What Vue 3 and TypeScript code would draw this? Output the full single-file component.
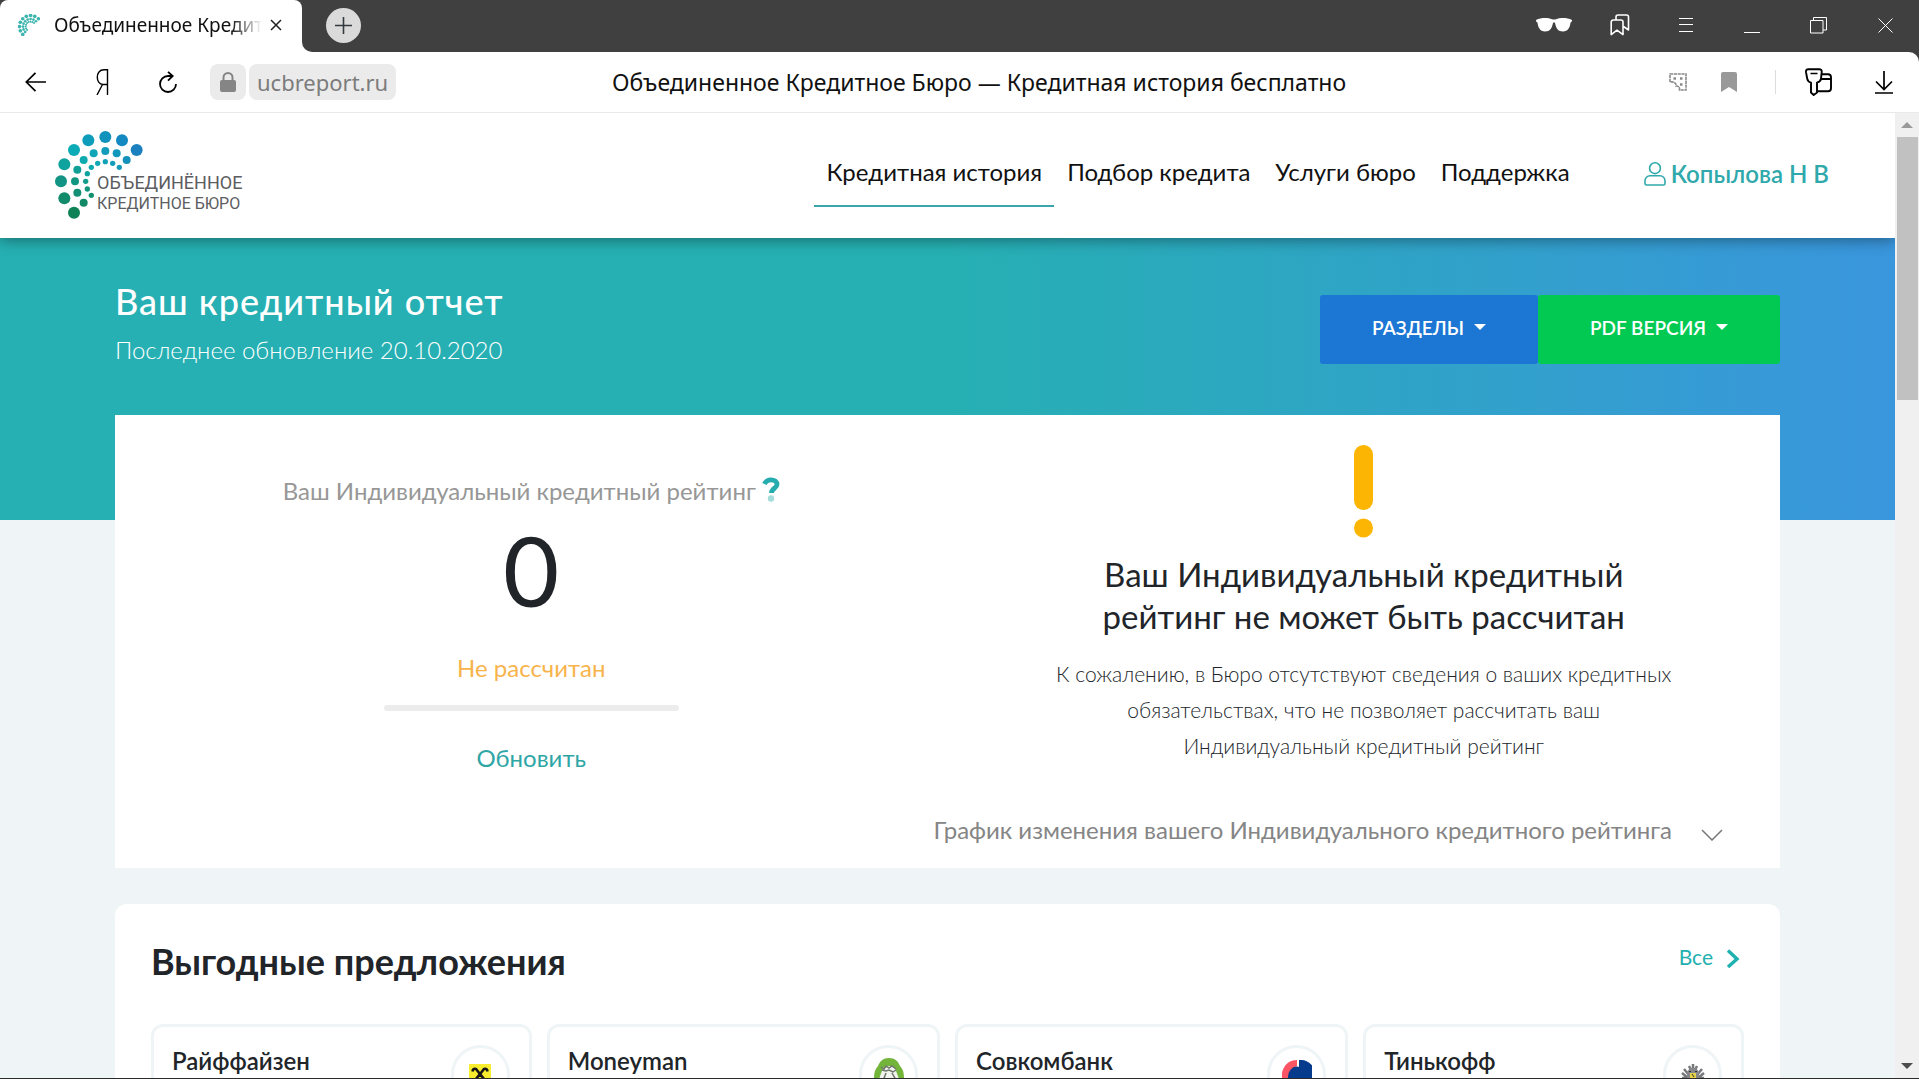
<script setup lang="ts">
interface Dot {
  x: number
  y: number
  r: number
  c: string
}

const dots: Dot[] = [
  { x: 290, y: 90, r: 18, c: '#1a80bf' },
  { x: 246, y: 61, r: 18, c: '#1488c0' },
  { x: 196, y: 51, r: 18, c: '#1092bd' },
  { x: 145, y: 61, r: 18, c: '#0d9dbb' },
  { x: 102, y: 90, r: 18, c: '#0aabb6' },
  { x: 73, y: 133, r: 18, c: '#10a29c' },
  { x: 63, y: 184, r: 18, c: '#129484' },
  { x: 73, y: 235, r: 18, c: '#128a6c' },
  { x: 102, y: 278, r: 18, c: '#0e8255' },
  { x: 260, y: 120, r: 12, c: '#1590bb' },
  { x: 230, y: 100, r: 12, c: '#1297bc' },
  { x: 196, y: 93, r: 12, c: '#109cba' },
  { x: 161, y: 100, r: 12, c: '#0fa4b8' },
  { x: 131, y: 120, r: 12, c: '#0eaaaf' },
  { x: 112, y: 149, r: 12, c: '#109f97' },
  { x: 105, y: 184, r: 12, c: '#129682' },
  { x: 112, y: 218, r: 12, c: '#128f74' },
  { x: 131, y: 248, r: 12, c: '#128a68' },
  { x: 238, y: 142, r: 8, c: '#159bb8' },
  { x: 218, y: 130, r: 8, c: '#129eb9' },
  { x: 196, y: 125, r: 8, c: '#10a3b8' },
  { x: 173, y: 130, r: 8, c: '#0fa8b4' },
  { x: 154, y: 142, r: 8, c: '#0faaac' },
  { x: 142, y: 161, r: 8, c: '#10a39e' },
  { x: 137, y: 184, r: 8, c: '#129c8c' },
  { x: 142, y: 207, r: 8, c: '#12957d' },
  { x: 154, y: 226, r: 8, c: '#129072' },
]

const menu: string[] = ['Кредитная история', 'Подбор кредита', 'Услуги бюро', 'Поддержка']
const offers: { name: string; logo: string }[] = [
  { name: 'Райффайзен', logo: 'raiffeisen' },
  { name: 'Moneyman', logo: 'moneyman' },
  { name: 'Совкомбанк', logo: 'sovcombank' },
  { name: 'Тинькофф', logo: 'tinkoff' },
]
</script>

<template>
  <div class="window">
    <div class="tabs">
      <div class="tab-slot">
        <div class="tab">
          <svg class="favicon" viewBox="45 33 264 264" aria-hidden="true">
            <circle v-for="(d, i) in dots" :key="i" :cx="d.x" :cy="d.y" :r="d.r + 4" fill="#3db5ae" />
          </svg>
          <span class="tab-title">Объединенное Кредитное Бюро</span>
          <button class="tab-close" aria-label="Закрыть вкладку">
            <svg width="12" height="12" viewBox="0 0 12 12"><path d="M1 1l10 10M11 1L1 11" stroke="#222" stroke-width="1.5" /></svg>
          </button>
        </div>
      </div>
      <div class="strip">
        <button class="new-tab" aria-label="Новая вкладка">
          <svg width="17" height="17" viewBox="0 0 17 17"><path d="M8.500 0v17M0 8.500h17" stroke="#333a3f" stroke-width="1.6" /></svg>
        </button>
        <div class="win-buttons">
          <button aria-label="Инкогнито">
            <svg width="36" height="14" viewBox="0 0 36 14" fill="#fff"><path d="M0 2C5-.5 12-.3 16 1.200q2 .6 4 0C24-.3 31-.5 36 2c0 1.500-.6 2-1.500 2.600C34 9.500 32 13.500 27 13.500c-5 0-7-3.500-8-8.500q-1-1.500-2 0c-1 5-3 8.500-8 8.500S2 9.500 1.500 4.600C.6 4 0 3.500 0 2z" /></svg>
          </button>
          <button aria-label="Закладки">
            <svg width="20" height="22" viewBox="0 0 20 22" fill="none" stroke="#fff" stroke-width="1.600" stroke-linejoin="round"><path d="M1.200 8a2 2 0 0 1 2-2H11a2 2 0 0 1 2 2v12.600l-6-4.400-5.800 4.400zM6 5.500V3a2 2 0 0 1 2-2h8.500a2 2 0 0 1 2 2v13l-5-3.500" /></svg>
          </button>
          <button aria-label="Меню">
            <svg width="14" height="14" viewBox="0 0 14 14" stroke="#fff"><path d="M0 .5h14M0 6.500h14M0 13.500h14" /></svg>
          </button>
          <button aria-label="Свернуть">
            <svg width="16" height="16" viewBox="0 0 16 16" stroke="#fff"><path d="M0 15.500h16" /></svg>
          </button>
          <button aria-label="Восстановить">
            <svg width="17" height="17" viewBox="0 0 17 17" fill="none" stroke="#fff"><path d="M.5 3.500h12.500v12.500H.5zM3.500 3V.5h13v12.500H13" /></svg>
          </button>
          <button class="close" aria-label="Закрыть">
            <svg width="15" height="15" viewBox="0 0 15 15" stroke="#fff"><path d="M.5.5l14 14M14.500.5l-14 14" /></svg>
          </button>
        </div>
      </div>
    </div>

    <div class="toolbar-back">
      <div class="toolbar">
        <div class="nav-buttons">
          <button aria-label="Назад">
            <svg width="22" height="20" viewBox="0 0 22 20" fill="none" stroke="#000" stroke-width="1.700"><path d="M21 10H1.500M10.500.8L1.300 10l9.200 9.200" /></svg>
          </button>
          <button aria-label="Яндекс">
            <svg width="13" height="26" viewBox="0 0 13 26" fill="none" stroke="#000" stroke-width="1.400"><path d="M11.500 26V.8H8C3.500.8 1.300 4 1.300 8.200S3.500 15.500 7 15.500h4.500M6.500 15.500L1 26" /></svg>
          </button>
          <button aria-label="Обновить страницу">
            <svg width="18" height="22" viewBox="0 0 18 22" fill="none" stroke="#000" stroke-width="1.800"><path d="M13.500 5H9a8 8 0 1 0 8 8M9 .8L13.700 5 9 9.700" /></svg>
          </button>
        </div>
        <button class="lock" aria-label="Сведения о сайте">
          <svg width="16" height="20" viewBox="0 0 16 20"><rect y="8" width="16" height="12" rx="2" fill="#858585" /><path d="M3.500 9V5.500a4.500 4.500 0 0 1 9 0V9" fill="none" stroke="#858585" stroke-width="2" /></svg>
        </button>
        <button class="domain">ucbreport.ru</button>
        <div class="page-title">Объединенное Кредитное Бюро — Кредитная история бесплатно</div>
        <div class="tools">
          <button class="small" aria-label="Перевод">
            <svg width="18" height="18" viewBox="0 0 18 18" fill="none" stroke="#8a8a8a" stroke-width="1.600"><path d="M1 1h16v16h-6.500c.5-3-1-4-3.500-4 .3-3-2-4.500-6-4z" stroke-dasharray="3.200 .6" /><path d="M4.500 5.500h2.500M11 5.500h2.500M11 11.500h2.500" stroke-width="2.400" /></svg>
          </button>
          <button class="small" aria-label="В закладки">
            <svg width="16" height="20" viewBox="0 0 16 20"><path d="M0 2q0-2 2-2h12q2 0 2 2v18l-8-5-8 5z" fill="#999" /></svg>
          </button>
          <span class="divider"></span>
          <button class="wide" aria-label="Пароли и карты">
            <svg width="27" height="28" viewBox="0 0 27 28" fill="none" stroke="#000" stroke-width="1.900" stroke-linejoin="round"><path d="M3.500 1.200h10.500q3 0 2.700 3l-.7 6.500q-.3 3-4 4V24.500l-3.300 2.500L6 24.500V14.700q-3.300-1-3.800-4L1 4.200q-.3-3 2.500-3z" /><path d="M5.500 5.500h7" stroke-width="1.500" /><path d="M16.500 6.200H23q3 0 3 3v11q0 3-3 3H12.500M16 11h10" /></svg>
          </button>
          <button class="wide" aria-label="Загрузки">
            <svg width="18" height="23" viewBox="0 0 18 23" fill="none" stroke="#000" stroke-width="1.700"><path d="M9 0v18M1 10.500l8 8 8-8M0 22h18" /></svg>
          </button>
        </div>
      </div>
    </div>

    <div class="viewport">
      <div class="page">
        <header class="header">
          <a class="logo" href="#">
            <svg viewBox="45 33 264 264" width="88" height="88" aria-hidden="true">
              <circle v-for="(d, i) in dots" :key="i" :cx="d.x" :cy="d.y" :r="d.r" :fill="d.c" />
            </svg>
            <span class="logo-text">ОБЪЕДИНЁННОЕ<br /><small>КРЕДИТНОЕ БЮРО</small></span>
          </a>
          <nav class="menu">
            <a v-for="(m, i) in menu" :key="m" href="#" :class="{ active: i === 0 }">{{ m }}</a>
          </nav>
          <a class="user" href="#">
            <svg width="22" height="24" viewBox="0 0 22 24" fill="none" stroke="#2fa9ab" stroke-width="1.600"><circle cx="11" cy="6.200" r="5.400" /><path d="M6 13.800h10a5 5 0 0 1 5 5v2.700q0 1.500-1.500 1.500h-17Q1 23 1 21.500v-2.700a5 5 0 0 1 5-5z" /></svg>
            <span>Копылова Н В</span>
          </a>
        </header>

        <section class="hero">
          <div>
            <h1>Ваш кредитный отчет</h1>
            <p>Последнее обновление 20.10.2020</p>
          </div>
          <div class="actions">
            <button class="sections">Разделы<i class="caret"></i></button>
            <button class="pdf">PDF версия<i class="caret"></i></button>
          </div>
        </section>

        <main class="content">
          <section class="rating">
            <div class="halves">
              <div class="score">
                <p class="score-label">
                  Ваш Индивидуальный кредитный рейтинг
                  <svg width="18" height="26" viewBox="0 0 18 26"><path d="M2.500 8C3.700 5 6.200 3.800 9 3.800c3.800 0 6 1.900 6 4.600 0 4-5.500 3.800-5.500 8.600" fill="none" stroke="#24acae" stroke-width="4.800" /><circle cx="9" cy="22.500" r="3.200" fill="#a5dcdc" /></svg>
                </p>
                <div class="score-value">0</div>
                <div class="score-state">Не рассчитан</div>
                <div class="score-bar"></div>
                <a href="#" class="refresh">Обновить</a>
              </div>
              <div class="notice">
                <svg width="19" height="93" viewBox="0 0 19 93" fill="#fcb503"><rect width="19" height="65" rx="9.500" /><circle cx="9.500" cy="83" r="9.500" /></svg>
                <h2>Ваш Индивидуальный кредитный рейтинг не может быть рассчитан</h2>
                <p>К сожалению, в Бюро отсутствуют сведения о ваших кредитных обязательствах, что не позволяет рассчитать ваш Индивидуальный кредитный рейтинг</p>
              </div>
            </div>
            <button class="chart-toggle">
              График изменения вашего Индивидуального кредитного рейтинга
              <svg width="22" height="22" viewBox="0 0 22 22" fill="none" stroke="#777" stroke-width="1.500"><path d="M1 11l10 10L21 11" /></svg>
            </button>
          </section>

          <section class="offers">
            <div class="offers-head">
              <h2>Выгодные предложения</h2>
              <a href="#">
                Все
                <svg width="14" height="22" viewBox="0 0 14 22" fill="none" stroke="#1fb0b0" stroke-width="3.400"><path d="M2 4.500L11 13 2 21" /></svg>
              </a>
            </div>
            <div class="offer-list">
              <article v-for="o in offers" :key="o.name" class="offer">
                <h3>{{ o.name }}</h3>
                <div class="badge">
                  <svg v-if="o.logo === 'raiffeisen'" width="22" height="22" viewBox="0 0 22 22"><rect width="22" height="22" fill="#f8ec2e" /><path d="M3.500 7.500Q4 4 7 5l4 5 4-5q3-1 3.500 2.500M7 5l8 10v4M15 5L7 15v4" fill="none" stroke="#151515" stroke-width="2.600" /></svg>
                  <svg v-else-if="o.logo === 'moneyman'" width="30" height="34" viewBox="0 0 30 34"><path d="M15 0c6 0 9 3 11 8 3 3 4 7 4 12 0 9-7 14-15 14S0 29 0 20C0 15 1 11 4 8 6 3 9 0 15 0z" fill="#73b53a" /><path d="M9 10q6-4 12 0l4 11-3 11H8L5 21z" fill="#f1f3ee" /><path d="M7 9l3 2 2-3 3 2 3-2 4 3M8 12l4 1 3-1 4 2 3-2M12 15l-3 8M18 15l4 7" fill="none" stroke="#6f776b" stroke-width="1.500" /></svg>
                  <svg v-else-if="o.logo === 'sovcombank'" width="30" height="30" viewBox="0 0 30 30"><path d="M17 0a15 15 0 1 1-7.500 27A9 9 0 0 1 17 7z" fill="#063a8c" /><path d="M17 7.500a10 10 0 0 0-8.500 9V30h12z" fill="#063a8c" /><path d="M15 0v6A11 11 0 0 0 6 17v8L3 24A15 15 0 0 1 15 0z" fill="#fb5565" /></svg>
                  <svg v-else width="24" height="24" viewBox="0 0 24 24"><path d="M12 1v4M8 3l2 4M16 3l-2 4M3 6l5 6M21 6l-5 6M1 10l6 5M23 10l-6 5M1 15h6M23 15h-6" stroke="#77787b" stroke-width="2.500" fill="none" /><path d="M6 9l3-4h6l3 4v9l-6 5-6-5z" fill="#85868a" /><path d="M9 10h6v7l-3 2-3-2z" fill="#e6d34a" /><path d="M8 8.500h2M14 8.500h2M11 11l2 3" stroke="#333" /></svg>
                </div>
              </article>
            </div>
          </section>
        </main>
      </div>
      <div class="scrollbar" aria-hidden="true">
        <i class="arrow-up"></i>
        <i class="thumb"></i>
        <i class="arrow-down"></i>
      </div>
    </div>
  </div>
</template>

<style>
body {
  background: #eff5f7;
}
</style>

<style scoped>
.window,
.window * {
  box-sizing: border-box;
}
.window {
  display: flex;
  flex-direction: column;
  height: 100vh;
  overflow: hidden;
  border-bottom: 1px solid #2b2b2b;
  background: #fff;
  color: #212529;
  font-family: Lato, 'Open Sans', sans-serif;
}
h1,
h2,
h3,
p {
  margin: 0;
}
button {
  border: 0;
  padding: 0;
  background: none;
  font: inherit;
  color: inherit;
  display: flex;
  align-items: center;
  justify-content: center;
}
a {
  color: inherit;
  text-decoration: none;
}
svg {
  display: block;
  flex: none;
}

.tabs {
  display: flex;
  height: 52px;
  flex: none;
}
.tab-slot {
  flex: none;
  width: 302px;
  background: linear-gradient(#404040 20px, #fff 20px);
}
.tab {
  display: flex;
  align-items: center;
  height: 52px;
  padding: 0 20px 2px 18px;
  border-radius: 8px 8px 0 0;
  background: #fff;
}
.favicon {
  width: 22px;
  height: 22px;
  margin-right: 14px;
}
.tab-title {
  flex: 1;
  overflow: hidden;
  white-space: nowrap;
  font: 19px/28px 'Noto Sans', sans-serif;
  color: #111;
  mask-image: linear-gradient(90deg, #000 85%, transparent);
}
.tab-close {
  margin-left: 8px;
}
.strip {
  flex: 1;
  display: flex;
  align-items: center;
  justify-content: space-between;
  padding: 0 0 2px 24px;
  border-bottom-left-radius: 10px;
  background: #404040;
}
.new-tab {
  width: 35px;
  height: 35px;
  border-radius: 50%;
  background: #dadada;
}
.win-buttons {
  display: flex;
}
.win-buttons button {
  width: 66px;
  height: 50px;
}
.win-buttons .close {
  width: 68px;
}

.toolbar-back {
  flex: none;
  background: #404040;
}
.toolbar {
  display: flex;
  align-items: center;
  height: 61px;
  border-bottom: 1px solid #e9e9e9;
  border-top-right-radius: 10px;
  background: #fff;
}
.nav-buttons {
  display: flex;
  padding: 0 9px 0 3px;
}
.nav-buttons button {
  width: 66px;
  height: 36px;
}
.lock {
  width: 36px;
  height: 36px;
  margin-right: 3px;
  border-radius: 8px;
  background: #ebebeb;
}
.domain {
  height: 36px;
  padding: 0 8px;
  border-radius: 8px;
  background: #ebebeb;
  font: 22px/36px 'Noto Sans', sans-serif;
  color: #7c7c7c;
}
.page-title {
  flex: 1;
  text-align: center;
  white-space: nowrap;
  font: 23px/36px 'Noto Sans', sans-serif;
  color: #111;
}
.tools {
  display: flex;
  align-items: center;
  justify-content: flex-end;
  width: 357px;
  padding-right: 2px;
}
.small {
  width: 51px;
  height: 36px;
}
.divider {
  width: 1px;
  height: 24px;
  margin: 0 9px 0 21px;
  background: #ddd;
}
.wide {
  width: 66px;
  height: 36px;
}

.viewport {
  flex: 1;
  min-height: 0;
  display: flex;
}
.page {
  flex: 1;
  min-width: 0;
  overflow: hidden;
  background: #eff5f7;
}
.header {
  position: relative;
  z-index: 1;
  display: flex;
  align-items: center;
  height: 125px;
  padding: 0 66px 4px 55px;
  background: #fff;
  box-shadow: 0 2px 14px rgba(0, 0, 0, 0.4);
}
.logo {
  position: relative;
  width: 190px;
  padding-top: 2px;
}
.logo-text {
  position: absolute;
  left: 42px;
  top: 44px;
  white-space: nowrap;
  font: 18px/20px Roboto, sans-serif;
  color: #5c5d61;
}
.logo-text small {
  font-size: 16px;
}
.menu {
  display: flex;
  gap: 1px;
  margin-left: auto;
  font-size: 24px;
  line-height: 30px;
  color: #111;
}
.menu a {
  padding: 16px 12px 18px;
  border-bottom: 2px solid transparent;
}
.menu a.active {
  border-color: #3aa6ab;
}
.user {
  display: flex;
  align-items: center;
  gap: 5px;
  margin-left: 62px;
  font-size: 24px;
  line-height: 30px;
  font-weight: 600;
  color: #2fa9ab;
}

.hero {
  display: flex;
  justify-content: space-between;
  align-items: flex-start;
  height: 282px;
  padding: 41px 115px 0;
  background: linear-gradient(90deg, #26b0b3 50%, #3a96dd);
  color: #fff;
}
.hero h1 {
  font-size: 36px;
  line-height: 44px;
  font-weight: 500;
  letter-spacing: 1px;
}
.hero p {
  margin-top: 12px;
  font-size: 24px;
  line-height: 30px;
  font-weight: 300;
}
.actions {
  display: flex;
  margin-top: 16px;
}
.actions button {
  height: 69px;
  padding: 0 52px 4px;
  border-radius: 3px;
  background: #1b76d4;
  font-size: 19px;
  font-weight: 600;
  text-transform: uppercase;
  color: #fff;
}
.actions .pdf {
  background: #02c952;
}
.caret {
  margin: 0 0 2px 10px;
  border: 6px solid transparent;
  border-top-color: #fff;
  border-bottom: 0;
}

.content {
  position: relative;
  margin-top: -105px;
  padding: 0 115px;
}
.rating {
  height: 453px;
  background: #fff;
}
.halves {
  display: grid;
  grid-template-columns: 1fr 1fr;
  height: 390px;
}
.score {
  display: flex;
  flex-direction: column;
  align-items: center;
  padding-top: 61px;
  font-size: 24px;
  line-height: 30px;
}
.score-label {
  display: flex;
  gap: 6px;
  color: #979797;
}
.score-value {
  margin-top: 6px;
  font-size: 97px;
  line-height: 116px;
}
.score-state {
  margin-top: 25px;
  color: #f8b44c;
}
.score-bar {
  width: 295px;
  height: 6px;
  margin: 22px 0 32px;
  border-radius: 3px;
  background: #ececec;
}
.refresh {
  color: #2fa6a6;
}
.notice {
  display: flex;
  flex-direction: column;
  align-items: center;
  padding-top: 30px;
  text-align: center;
}
.notice h2 {
  max-width: 580px;
  margin-top: 15px;
  font-size: 33px;
  line-height: 42px;
  font-weight: 400;
}
.notice p {
  max-width: 640px;
  margin-top: 19px;
  font-size: 21px;
  line-height: 36px;
  font-weight: 300;
}
.chart-toggle {
  gap: 29px;
  margin: 10px 57px 0 auto;
  font-size: 24px;
  line-height: 30px;
  color: #858585;
}
.offers {
  margin-top: 36px;
  padding: 35px 36px 40px;
  border-radius: 12px;
  background: #fff;
}
.offers-head {
  display: flex;
  justify-content: space-between;
  align-items: flex-start;
}
.offers-head h2 {
  font-size: 36px;
  line-height: 44px;
  font-weight: 700;
}
.offers-head a {
  display: flex;
  align-items: center;
  gap: 13px;
  margin: 3px 4px 0 0;
  font-size: 21px;
  line-height: 30px;
  color: #23b0b0;
}
.offer-list {
  display: flex;
  gap: 15px;
  margin-top: 41px;
}
.offer {
  flex: 394 1 0;
  display: flex;
  align-items: flex-start;
  justify-content: space-between;
  height: 220px;
  padding: 18px 19px 18px 18px;
  border: 3px solid #eff4f6;
  border-radius: 12px;
}
.offer:first-child,
.offer:last-child {
  flex-grow: 380;
}
.offer h3 {
  font-size: 24px;
  line-height: 32px;
  font-weight: 600;
}
.badge {
  display: flex;
  align-items: center;
  justify-content: center;
  width: 59px;
  height: 59px;
  border: 3px solid #eff4f6;
  border-radius: 50%;
}

.scrollbar {
  flex: none;
  display: flex;
  flex-direction: column;
  align-items: center;
  width: 24px;
  padding: 9px 0 9px;
  background: #f0f0f0;
}
.arrow-up,
.arrow-down {
  border: 6px solid transparent;
}
.arrow-up {
  border-top: 0;
  border-bottom-color: #999;
}
.arrow-down {
  margin-top: auto;
  border-bottom: 0;
  border-top-color: #4d4d4d;
}
.thumb {
  width: 21px;
  height: 263px;
  margin-top: 9px;
  background: #c1c1c1;
}
</style>
